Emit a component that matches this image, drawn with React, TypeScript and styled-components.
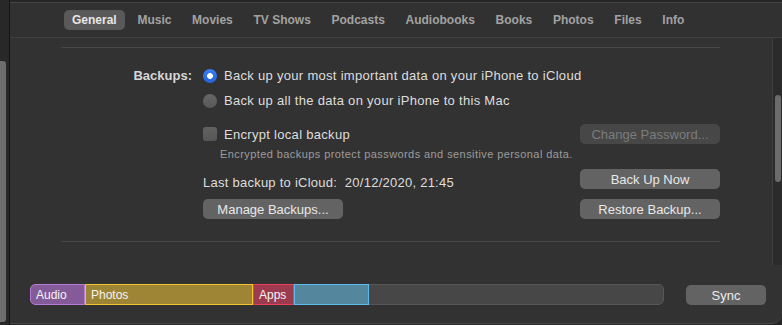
import React from "react";
import styled, { createGlobalStyle } from "styled-components";

const GlobalStyle = createGlobalStyle`
  html, body {
    margin: 0;
    padding: 0;
    background: #262626;
  }
  * { box-sizing: border-box; }
  body {
    font-family: "Liberation Sans", Arial, sans-serif;
    -webkit-font-smoothing: antialiased;
  }
`;

const tabs = ["General", "Music", "Movies", "TV Shows", "Podcasts", "Audiobooks", "Books", "Photos", "Files", "Info"];

const storage = [
  { label: "Audio", width: 55, fill: "#845a99", edge: "#b47bd8" },
  { label: "Photos", width: 168, fill: "#9d8535", edge: "#f0c630" },
  { label: "Apps", width: 41, fill: "#9c3a4e", edge: "#e8405d" },
  { label: "", width: 75, fill: "#54879e", edge: "#5cbcf0" },
];

export default function App() {
  return (
    <>
      <GlobalStyle />
      <Screen>
        {/* Neighbouring window edge */}
        <SideStrip>
          <SideThumb />
        </SideStrip>

        <Window>
          <TabBar>
            {tabs.map((t, i) => (
              <Tab key={t} $active={i === 0}>{t}</Tab>
            ))}
          </TabBar>

          <Body>
            <Pane>
              <Rule />
              <Section>
                <OptionRow>
                  <FieldLabel>Backups:</FieldLabel>
                  <Radio $on />
                  <OptionText>Back up your most important data on your iPhone to iCloud</OptionText>
                </OptionRow>
                <OptionRow>
                  <FieldLabel />
                  <Radio />
                  <OptionText>Back up all the data on your iPhone to this Mac</OptionText>
                </OptionRow>

                <ActionRow $top={11}>
                  <Indent>
                    <Checkbox />
                    <OptionText>Encrypt local backup</OptionText>
                  </Indent>
                  <Button disabled>Change Password...</Button>
                </ActionRow>
                <Note>Encrypted backups protect passwords and sensitive personal data.</Note>

                <ActionRow $top={5}>
                  <Indent>
                    <LastBackup>Last backup to iCloud:&nbsp; 20/12/2020, 21:45</LastBackup>
                  </Indent>
                  <Button>Back Up Now</Button>
                </ActionRow>
                <ActionRow $top={10}>
                  <Indent>
                    <Button $width={140}>Manage Backups...</Button>
                  </Indent>
                  <Button>Restore Backup...</Button>
                </ActionRow>
              </Section>
              <Rule $top={22} />
              <NextSection>
                <Checkbox />
              </NextSection>
            </Pane>

            <ScrollTrack>
              <ScrollThumb />
            </ScrollTrack>
          </Body>

          <Footer>
            <StorageBar>
              {storage.map((s, i) => (
                <Segment key={i} $fill={s.fill} $edge={s.edge} style={{ width: s.width }}>
                  {s.label}
                </Segment>
              ))}
              <FreeSpace />
            </StorageBar>
            <SyncButton>Sync</SyncButton>
          </Footer>
        </Window>
      </Screen>
    </>
  );
}

// --- Styles ---

const Screen = styled.div`
  display: flex;
  width: 782px;
  height: 325px;
  overflow: hidden;
  background: #262626;
`;

const SideStrip = styled.div`
  width: 10px;
  flex-shrink: 0;
  background: #282828;
  border-right: 1px solid #151515;
  padding-top: 61px;
  padding-bottom: 3px;
  display: flex;
`;

const SideThumb = styled.div`
  width: 6px;
  background: #6e6e6e;
  border-radius: 0 3px 3px 0;
`;

const Window = styled.div`
  flex: 1;
  display: flex;
  flex-direction: column;
  background: #323232;
  border-top: 1px solid #444;
  border-bottom: 1px solid #474747;
  border-bottom-right-radius: 10px;
  margin-top: 2px;
  margin-bottom: 1px;
  overflow: hidden;
`;

const TabBar = styled.div`
  height: 35px;
  flex-shrink: 0;
  display: flex;
  align-items: center;
  gap: 4.7px;
  padding-left: 54px;
  border-bottom: 1px solid #404040;
  background: #313131;
`;

const Tab = styled.div<{ $active?: boolean }>`
  height: 20px;
  padding: 0 8px;
  display: flex;
  align-items: center;
  border-radius: 5px;
  font-size: 12px;
  font-weight: 700;
  color: ${(p) => (p.$active ? "#e6e6e6" : "#a2a2a2")};
  background: ${(p) => (p.$active ? "#595959" : "transparent")};
`;

const Body = styled.div`
  display: flex;
  height: 227px;
  flex-shrink: 0;
`;

const Pane = styled.div`
  flex: 1;
  overflow: hidden;
  padding: 0 52px 0 51px;
  color: #dedede;
`;

const Rule = styled.div<{ $top?: number }>`
  height: 1px;
  background: #464646;
  margin-top: ${(p) => p.$top ?? 9}px;
`;

const Section = styled.div`
  padding-top: 15px;
  display: flex;
  flex-direction: column;
`;

const OptionRow = styled.div`
  display: flex;
  align-items: center;
  height: 25px;
`;

const FieldLabel = styled.div`
  width: 131px;
  margin-right: 11px;
  text-align: right;
  font-size: 13px;
  font-weight: 700;
  color: #d6d6d6;
`;

const Radio = styled.span<{ $on?: boolean }>`
  width: 14px;
  height: 14px;
  border-radius: 50%;
  flex-shrink: 0;
  margin-right: 7px;
  background: ${(p) =>
    p.$on
      ? "radial-gradient(circle, #fff 0 2.6px, transparent 3.2px), linear-gradient(#3b7ff2, #2562db)"
      : "linear-gradient(#666, #585858)"};
`;

const OptionText = styled.span`
  font-size: 13px;
  letter-spacing: 0.3px;
  color: #dedede;
  white-space: nowrap;
`;

const ActionRow = styled.div<{ $top: number }>`
  display: flex;
  align-items: center;
  justify-content: space-between;
  height: 20px;
  margin-top: ${(p) => p.$top}px;
`;

const Indent = styled.div`
  display: flex;
  align-items: center;
  padding-left: 142px;
`;

const Checkbox = styled.span`
  width: 14px;
  height: 14px;
  border-radius: 3px;
  flex-shrink: 0;
  margin-right: 7px;
  background: linear-gradient(#626262, #575757);
`;

const Note = styled.div`
  height: 20px;
  display: flex;
  align-items: center;
  padding-left: 159px;
  font-size: 11px;
  letter-spacing: 0.42px;
  color: #9c9c9c;
  white-space: nowrap;
`;

const LastBackup = styled.span`
  font-size: 13px;
  letter-spacing: 0.25px;
  color: #dedede;
  padding-top: 7px;
  white-space: nowrap;
`;

const Button = styled.button<{ $width?: number }>`
  width: ${(p) => p.$width ?? 140}px;
  height: 20px;
  border: none;
  border-radius: 5px;
  padding: 0;
  font-family: inherit;
  font-size: 13px;
  background: #636363;
  color: #e8e8e8;
  &:disabled {
    background: #474747;
    color: #7c7c7c;
  }
`;

const NextSection = styled.div`
  padding: 21px 0 0 142px;
`;

const ScrollTrack = styled.div`
  width: 10px;
  flex-shrink: 0;
  background: #2b2b2b;
  border-left: 1px solid #3d3d3d;
  padding: 57px 0 0 2px;
`;

const ScrollThumb = styled.div`
  width: 6px;
  height: 87px;
  border-radius: 3px;
  background: #6b6b6b;
`;

const Footer = styled.div`
  flex: 1;
  display: flex;
  align-items: flex-start;
  padding: 19px 16px 0 20px;
  gap: 22px;
`;

const StorageBar = styled.div`
  flex: 1;
  height: 21px;
  display: flex;
  border-radius: 5px;
  overflow: hidden;
`;

const Segment = styled.div<{ $fill: string; $edge: string }>`
  flex-shrink: 0;
  background: ${(p) => p.$fill};
  border: 1px solid ${(p) => p.$edge};
  padding-left: 5px;
  display: flex;
  align-items: center;
  font-size: 12px;
  color: #f4f4f4;
  &:first-child {
    border-radius: 5px 0 0 5px;
  }
`;

const FreeSpace = styled.div`
  flex: 1;
  background: #474747;
  border: 1px solid #575757;
  border-left: none;
  border-radius: 0 5px 5px 0;
`;

const SyncButton = styled.button`
  width: 80px;
  height: 20px;
  margin-top: 1px;
  border: none;
  border-radius: 5px;
  font-family: inherit;
  font-size: 13px;
  background: #636363;
  color: #ececec;
`;
